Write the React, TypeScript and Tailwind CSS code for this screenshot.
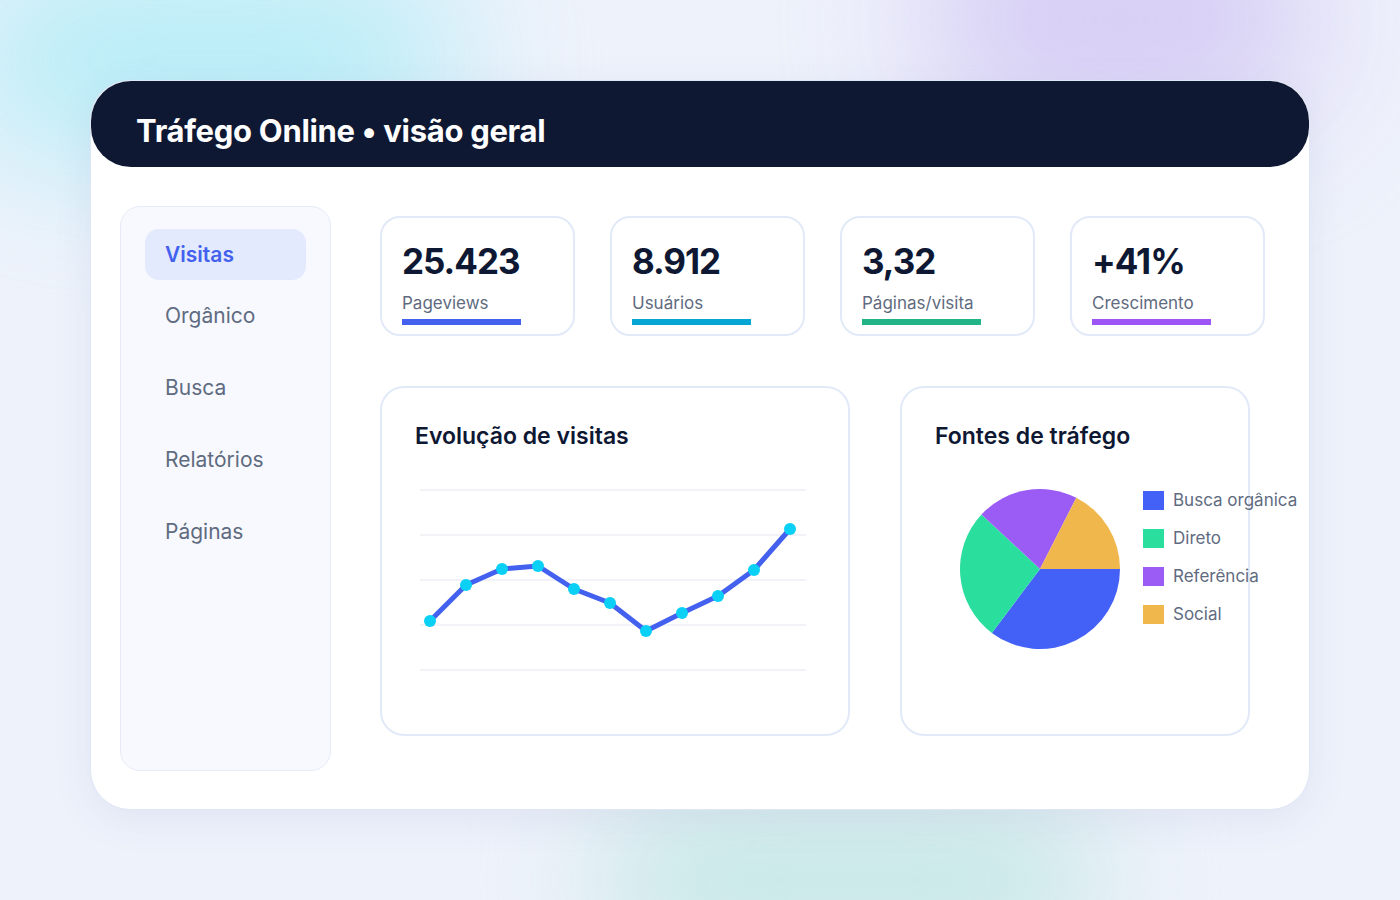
const font = { fontFamily: "Inter, 'Noto Sans', sans-serif" };

const stats = [
  { value: "25.423", label: "Pageviews", bar: "bg-[#4361ee]" },
  { value: "8.912", label: "Usuários", bar: "bg-[#06a6d4]" },
  { value: "3,32", label: "Páginas/visita", bar: "bg-[#20b486]" },
  { value: "+41%", label: "Crescimento", bar: "bg-[#9d55f5]" },
];

const menu = ["Orgânico", "Busca", "Relatórios", "Páginas"];

const points = [
  [10, 136], [46, 100], [82, 84], [118, 81], [154, 104], [190, 118],
  [226, 146], [262, 128], [298, 111], [334, 85], [370, 44],
];

const legend = [
  { label: "Busca orgânica", color: "bg-[#4361f7]" },
  { label: "Direto", color: "bg-[#2ade9e]" },
  { label: "Referência", color: "bg-[#9b5cf6]" },
  { label: "Social", color: "bg-[#f0b84c]" },
];

function slice(a0: number, a1: number) {
  const r = 80;
  const p = (a: number) => [80 + r * Math.cos((a * Math.PI) / 180), 80 + r * Math.sin((a * Math.PI) / 180)];
  const [x0, y0] = p(a0);
  const [x1, y1] = p(a1);
  return `M80 80 L${x0} ${y0} A${r} ${r} 0 ${a1 - a0 > 180 ? 1 : 0} 1 ${x1} ${y1} Z`;
}

export default function App() {
  return (
    <div style={font} className="relative w-[1400px] h-[900px] overflow-hidden bg-[#eef2fb] pt-[80px] pl-[90px]">
      {/* background blobs */}
      <div className="absolute -left-10 -top-10 w-[500px] h-[200px] rounded-full bg-[#a8ecf6] blur-[70px] opacity-80" />
      <div className="absolute right-20 -top-20 w-[400px] h-[200px] rounded-full bg-[#d2c6f4] blur-[70px] opacity-90" />
      <div className="absolute left-[600px] bottom-[-60px] w-[500px] h-[160px] rounded-full bg-[#c6e8e6] blur-[60px]" />

      <div className="relative w-[1220px] h-[730px] rounded-[40px] bg-white border border-[#dfe6f5] shadow-[0_10px_40px_rgba(60,80,140,0.08)]">
        <div className="h-[86px] bg-[#0e1833] rounded-[40px] flex items-center px-[45px] pt-[14px]">
          <h1 className="text-white text-[31px] font-bold tracking-[-0.3px]">Tráfego Online • visão geral</h1>
        </div>

        <div className="flex pt-[39px] pl-[29px]">
          <div className="w-[211px] h-[565px] rounded-[20px] bg-[#f7f9fe] border border-[#e6ebf7] pt-[22px] px-[24px] shrink-0">
            <div className="h-[51px] rounded-[14px] bg-[#e4eafd] flex items-center px-[20px] text-[21px] font-semibold text-[#4361ee]">Visitas</div>
            {menu.map((m) => (
              <div key={m} className="h-[72px] flex items-center px-[20px] text-[21px] text-[#5f6b80] first:mt-[20px]">{m}</div>
            ))}
          </div>

          <div className="ml-[49px] pt-[10px]">
            <div className="flex gap-[35px]">
              {stats.map((s) => (
                <div key={s.label} className="w-[195px] h-[120px] rounded-[20px] border-2 border-[#e2e9f8] px-[20px] pt-[20px]">
                  <div className="text-[35px] font-bold text-[#0e1833] leading-[46px] tracking-[-1px]">{s.value}</div>
                  <div className="text-[17px] text-[#5f6b80] mt-[8px] leading-[22px]">{s.label}</div>
                  <div className={`w-[119px] h-[6px] mt-[5px] ${s.bar}`} />
                </div>
              ))}
            </div>

            <div className="flex gap-[50px] mt-[50px]">
              <div className="w-[470px] h-[350px] rounded-[24px] border-2 border-[#e2e9f8] pt-[31px] px-[33px]">
                <div className="text-[23px] font-semibold text-[#0e1833]">Evolução de visitas</div>
                <svg width="390" height="190" className="mt-[31px] ml-[5px]">
                  {[5, 50, 95, 140, 185].map((y) => (
                    <line key={y} x1="0" x2="386" y1={y} y2={y} stroke="#e3e7f0" strokeWidth="1" />
                  ))}
                  <polyline points={points.map((p) => p.join(",")).join(" ")} fill="none" stroke="#4361ee" strokeWidth="5" strokeLinejoin="round" />
                  {points.map(([x, y]) => (
                    <circle key={x} cx={x} cy={y} r="6" fill="#0ad0f5" />
                  ))}
                </svg>
              </div>

              <div className="w-[350px] h-[350px] rounded-[24px] border-2 border-[#e2e9f8] pt-[31px] px-[33px]">
                <div className="text-[23px] font-semibold text-[#0e1833]">Fontes de tráfego</div>
                <div className="flex items-start mt-[26px] ml-[24px] w-[420px]">
                  <svg width="162" height="162" viewBox="-1 -1 162 162" className="mt-[8px] shrink-0">
                    <path d={slice(0, 127)} fill="#4361f7" />
                    <path d={slice(127, 223)} fill="#2ade9e" />
                    <path d={slice(223, 297)} fill="#9b5cf6" />
                    <path d={slice(297, 360)} fill="#f0b84c" />
                  </svg>
                  <div className="ml-[22px] mt-[11px] flex flex-col gap-[18px] whitespace-nowrap">
                    {legend.map((l) => (
                      <div key={l.label} className="flex items-center gap-[9px] h-[20px]">
                        <span className={`w-[21px] h-[19px] ${l.color}`} />
                        <span className="text-[17px] text-[#5f6b80]">{l.label}</span>
                      </div>
                    ))}
                  </div>
                </div>
              </div>
            </div>
          </div>
        </div>
      </div>
    </div>
  );
}
